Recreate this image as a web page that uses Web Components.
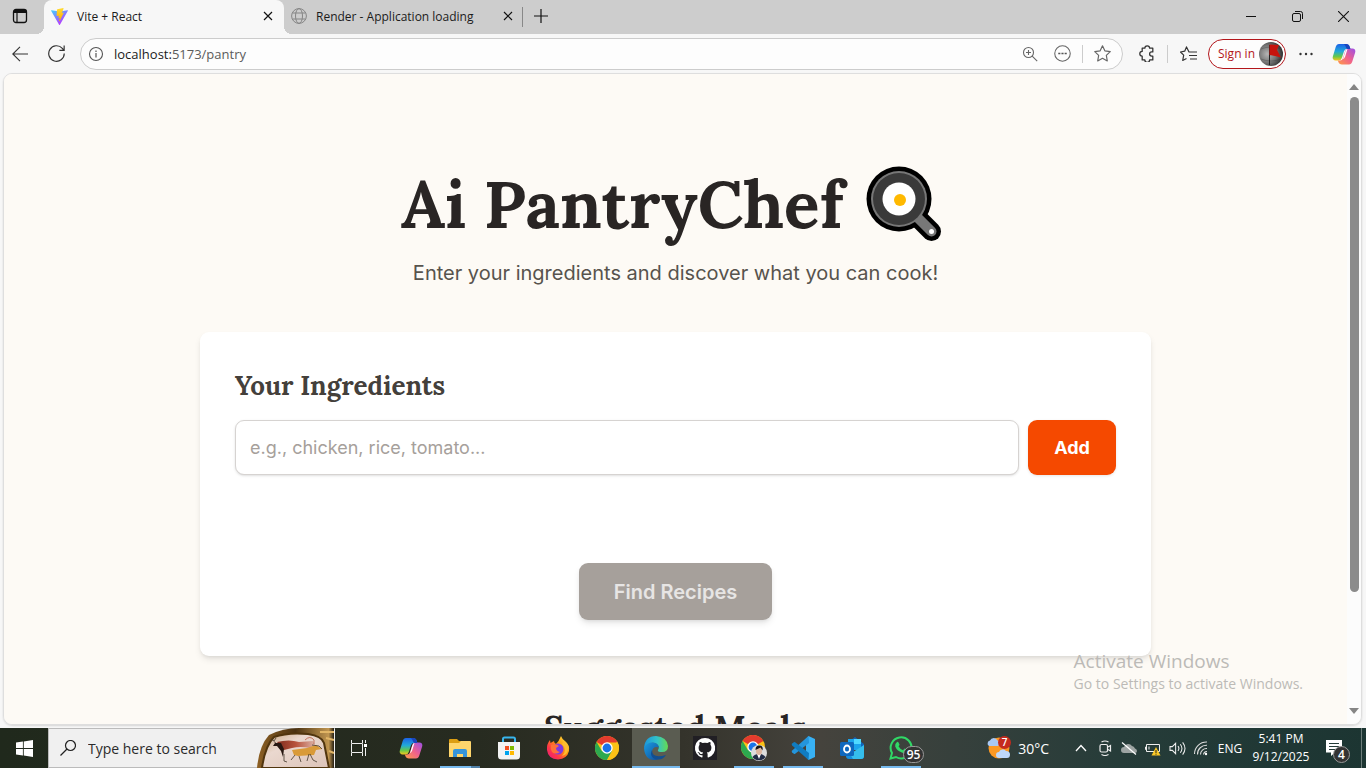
<!DOCTYPE html>
<html lang="en">
<head>
<meta charset="utf-8">
<title>Vite + React</title>
<style>
html,body{margin:0;height:100%}
body{font-family:"Segoe UI","Open Sans",sans-serif;overflow:hidden;color:#1b1b1b}
</style>
</head>
<body>
<desktop-screen></desktop-screen>
<script>
const ICONS = {
  workspaces:['0 0 16 16','<rect x="1.5" y="1.5" width="13" height="13" rx="2.5" fill="none" stroke="#111" stroke-width="1.3"/><path d="M1.5 5V4a2.500 2.500 0 0 1 2.500-2.500h8A2.500 2.500 0 0 1 14.500 4v1z" fill="#111"/><path d="M5 5v9" stroke="#111" stroke-width="1.200"/>'],
  vite:['0 0 16 16','<defs><linearGradient id="a" x1="0" y1="0" x2=".6" y2="1"><stop stop-color="#41d1ff"/><stop offset="1" stop-color="#bd34fe"/></linearGradient><linearGradient id="b" x1="0" y1="0" x2="0" y2="1"><stop stop-color="#ffdd35"/><stop offset="1" stop-color="#ffa800"/></linearGradient></defs><path d="M15.900 2.600 8.400 15.700q-.4.500-.8 0L.1 2.600q-.2-.6.4-.6L8 3.300 15.500 2q.6 0 .4.600z" fill="url(#a)"/><path d="M11.500.1 6 1.200l-.4.400-.3 5.600.4.300 1.700-.3-.5 2.300 1.400-.4-.7 3.200.5.100 4-8.100-1.900.3L11.900.500z" fill="url(#b)"/>'],
  close:['0 0 10 10','<path d="m1 1 8 8M9 1 1 9" stroke="#111" stroke-width="1.200"/>'],
  globe:['0 0 16 16','<g fill="none" stroke="#858585"><circle cx="8" cy="8" r="7.400"/><ellipse cx="8" cy="8" rx="3.500" ry="7.400"/><path d="M1.500 5h13M1.500 11h13"/></g>'],
  plus:['0 0 14 14','<path d="M7 0v14M0 7h14" stroke="#111" stroke-width="1.200"/>'],
  min:['0 0 10 10','<path d="M0 5.500h10" stroke="#111"/>'],
  restore:['0 0 11 11','<g fill="none" stroke="#111"><rect x=".5" y="2.500" width="8" height="8" rx="1.500"/><path d="M3 .5h5.500a2 2 0 0 1 2 2V8"/></g>'],
  winclose:['0 0 10 10','<path d="m0 0 10 10M10 0 0 10" stroke="#111"/>'],
  back:['0 0 16 16','<path d="M16 8H.8M8 .8.800 8 8 15.200" fill="none" stroke="#333" stroke-width="1.100"/>'],
  reload:['0 0 16 16','<path d="M15.300 8A7.300 7.300 0 1 1 13.500 3.200L15 5M15.200.500V5h-4.500" fill="none" stroke="#333" stroke-width="1.100"/>'],
  info:['0 0 16 16','<circle cx="8" cy="8" r="6.500" fill="none" stroke="#555" stroke-width="1.100"/><path d="M8 7v4.500M8 4.500V6" stroke="#555" stroke-width="1.200"/>'],
  zoom:['0 0 16 16','<g fill="none" stroke="#666" stroke-width="1.100"><circle cx="6.500" cy="6.500" r="5"/><path d="m10.200 10.200 5 5M4 6.500h5M6.500 4v5"/></g>'],
  more:['0 0 16 16','<circle cx="8" cy="8" r="7.300" fill="none" stroke="#666"/><path d="M4 7.300h2v1.400H4zM7 7.300h2v1.400H7zM10 7.300h2v1.400h-2z" fill="#555"/>'],
  star:['0 0 16 16','<path d="m8 .8 2.200 4.700 5.100.7-3.700 3.600.9 5.200L8 12.500 3.500 15l.9-5.200L.7 6.200l5.100-.7z" fill="none" stroke="#666" stroke-width="1.100" stroke-linejoin="round"/>'],
  puzzle:['0 0 16 16','<path d="M5.500 3A2.200 2.200 0 0 1 10 3h3v3.500h-1a2 2 0 0 0 0 4h1V14h-3a2.200 2.200 0 0 1-4.500 0H3v-3.500a2.200 2.200 0 0 1 0-4.500V3z" fill="none" stroke="#333" stroke-width="1.200" stroke-linejoin="round"/>'],
  favs:['0 0 17 16','<path d="M10.500 6H9L6.500.900 4.700 5.200l-4.200.8 3.200 3.200-1 5.300L6.500 12.500M10 6h7M9 9.500h8M10 13h7" fill="none" stroke="#333" stroke-width="1.200" stroke-linejoin="round"/>'],
  avatar:['0 0 24 24','<defs><radialGradient id="a" cx=".35" cy=".5" r=".7"><stop stop-color="#b5b5b5"/><stop offset=".5" stop-color="#777"/><stop offset="1" stop-color="#222"/></radialGradient></defs><circle cx="12" cy="12" r="12" fill="url(#a)"/><path d="M2 7q10-4 20 0M2 17q10 4 20 0" stroke="#333" stroke-width=".6" opacity=".5" fill="none"/><path d="M10.500 3v20" stroke="#222"/><path d="m10.500 2.500 9.500.5-2 5 4 7.500-6-1.500-5.500-1z" fill="#c6130d"/>'],
  dots:['0 0 14 14','<g fill="#333"><circle cx="1.500" cy="7" r="1.200"/><circle cx="7" cy="7" r="1.200"/><circle cx="12.500" cy="7" r="1.200"/></g>'],
  copilot:['0 0 24 24','<defs><linearGradient id="a" x1="0" y1="0" x2="0" y2="1"><stop stop-color="#1c62e8"/><stop offset=".45" stop-color="#21a9d9"/><stop offset=".75" stop-color="#64c84b"/><stop offset="1" stop-color="#f6c51b"/></linearGradient><linearGradient id="b" x1="1" y1="0" x2="0" y2="1"><stop stop-color="#9a4fe8"/><stop offset=".5" stop-color="#f0618c"/><stop offset="1" stop-color="#ff9c45"/></linearGradient></defs><path d="M7 2h7q3 0 3.800 3l.6 2H15q-2.300 0-3 2.200L9.800 16Q9 18.500 6.500 18.500h-3Q-.3 18 1 14L3.700 5Q4.600 2 7 2z" fill="url(#a)"/><path d="M17 22.500h-7q-3 0-3.800-3l-.4-1H8q2.300 0 3-2.200L13.200 9Q14 6.500 16.500 6.500h4Q24.300 7 23 11l-2.700 8.500Q19.400 22.500 17 22.500z" fill="url(#b)"/><path d="M12 2h2q3 0 3.800 3l.6 2H15.500Q14 7 13.500 4z" fill="#1b45bd"/><path d="m11.500 15.500 2-6.500q.7-2 2-2l-2.300 7.500q-.6 2-2.700 3 .7-.7 1-2z" fill="#fff"/>'],
  pan:['0 0 84 76','<path d="m48 48 17.500 17.500" stroke="#000" stroke-width="19" stroke-linecap="round"/><circle cx="33" cy="33" r="32.500"/><circle cx="33" cy="33" r="28" fill="#777"/><path d="m50 50 15.500 15.500" stroke="#777" stroke-width="10" stroke-linecap="round"/><circle cx="33" cy="33" r="26" fill="#3a3a3a"/><circle cx="33" cy="33" r="16.500" fill="#fff"/><circle cx="34" cy="34" r="6" fill="#ffb900"/><circle cx="65.500" cy="65.500" r="2.500" fill="#fff"/>'],
  up:['0 0 10 6','<path d="M5 0l5 6H0z" fill="#858585"/>'],
  down:['0 0 10 6','<path d="M5 6l5-6H0z" fill="#858585"/>'],
  start:['0 0 16 16','<path d="M0 2.300 6.500 1.400v6.200H0zM7.300 1.300 16 0v7.600H7.300zM0 8.400h6.500v6.200L0 13.700zM7.300 8.400H16V16l-8.700-1.300z" fill="#fff"/>'],
  search:['0 0 16 16','<circle cx="10.500" cy="5.500" r="5" fill="none" stroke="#222" stroke-width="1.200"/><path d="M7 9 .5 15.500" stroke="#222" stroke-width="1.300"/>'],
  cave:['0 0 78 40','<defs><linearGradient id="a"><stop stop-color="#8d6024"/><stop offset=".5" stop-color="#4b3211"/><stop offset=".93" stop-color="#c09550"/><stop offset="1" stop-color="#231e12"/></linearGradient><linearGradient id="b" x1="0" y1="0" x2="1" y2="1"><stop stop-color="#c9a67e"/><stop offset=".35" stop-color="#ead8cf"/><stop offset="1" stop-color="#dcc3b8"/></linearGradient><linearGradient id="c"><stop stop-color="#7e2c1d"/><stop offset=".5" stop-color="#b9533c"/><stop offset="1" stop-color="#b9533c" stop-opacity=".25"/></linearGradient></defs><path d="M0 40Q2 18 12 7 26 0 42 0h35v40z" fill="url(#a)"/><path d="M5 40Q8 18 17 9q14-5 34-3 14 2 16 9l5 25z" fill="url(#b)" stroke="#51350e" stroke-width="2"/><path d="M63 4h14M69 10l8 2M72 23l5 2" stroke="#e1b566" stroke-width="2"/><path d="M20 14q12-3 22 0l14-1 2 4-5 3q-10-2-18 0l-8 2z" fill="url(#c)"/><path d="m16 12 3 3 5 0 3 6-1 8-2-6-4-5-4 0 2-3z" fill="#281711"/><path d="m35 22 15-2 9-3 6 4-6 1-2 5-16 1-4-1z" fill="#d99a38"/><path d="m27 26 0 7 3 1M38 27l-4 5m8-4 2 6m9-8 3 6 4 2m-8-8-2 7M55 17l7 1 3 3M14 11l3 2 2-3" fill="none" stroke="#43372b" stroke-width=".8"/><path d="M48 12q5-5 9 0v4" fill="none" stroke="#b34a32" stroke-width=".7"/>'],
  taskview:['0 0 16 16','<path d="M.5 0v3.500h11V0M.5 16v-3.500h11V16M.5 4v8M11.500 4v8M14.500 0v3M14.500 8v8" fill="none" stroke="#eee"/><path d="M13 4h3v3h-3z" fill="#fff"/>'],
  folder:['0 0 24 24','<path d="M1 4q0-1 1-1h7l2 2h11v6H1z" fill="#dc9e13"/><path d="M1 7h10l2-2h9q1 0 1 1v15H1z" fill="#ffd66c"/><path d="M5 21v-6q0-2 2-2h10q2 0 2 2v6h-4v-3H9v3z" fill="#3595dc"/>'],
  store:['0 0 24 24','<path d="M6 7V3q0-1.500 1.500-1.500h9Q18 1.500 18 3v4" fill="none" stroke="#38b5ed" stroke-width="2"/><path d="M1 6h22v14q0 3.500-3.500 3.500h-15Q1 23.500 1 20z" fill="#f3f3f3"/><path d="M8 10h4v4H8z" fill="#f25022"/><path d="M13 10h4v4h-4z" fill="#7fba00"/><path d="M8 15h4v4H8z" fill="#00a4ef"/><path d="M13 15h4v4h-4z" fill="#ffb900"/>'],
  firefox:['0 0 24 24','<defs><linearGradient id="a" x1="1" y1="0" x2="0" y2="1"><stop stop-color="#fff44f"/><stop offset=".4" stop-color="#ff980e"/><stop offset=".7" stop-color="#ff3647"/><stop offset="1" stop-color="#e31587"/></linearGradient></defs><path d="M15 0q1 3 4 5 5 4 4 10-2 8-11 8.500Q2 23 1 14 .500 8 4 4l.5 3L8 5q0 2 2 3 3-3 5-8z" fill="url(#a)"/><circle cx="12" cy="13" r="5.500" fill="#8039df"/><path d="M5 9q5-2 8 1l-3 2q0 3 4 4-5 3-8 0-2-3-1-7z" fill="#ff7139"/><path d="M16 8q6 6 0 12 7-2 6-9-1-4-4-6z" fill="#ffbd2f"/>'],
  chrome:['0 0 24 24','<circle cx="12" cy="12" r="12" fill="#fbc116"/><path d="M12 12 1.600 6a12 12 0 0 1 20.800 0z" fill="#e33b2e"/><path d="M1.600 6a12 12 0 0 0 10.400 18l5.200-9H6.800z" fill="#2da94f"/><path d="M12 6.500H22.700A12 12 0 0 1 12 24l5-9z" fill="#fbc116"/><circle cx="12" cy="12" r="5.700" fill="#fff"/><circle cx="12" cy="12" r="4.400" fill="#1a73e8"/>'],
  chromeuser:['0 0 27 26','<circle cx="12" cy="12" r="12" fill="#fbc116"/><path d="M12 12 1.600 6a12 12 0 0 1 20.800 0z" fill="#e33b2e"/><path d="M1.600 6a12 12 0 0 0 10.400 18l5.200-9H6.800z" fill="#2da94f"/><circle cx="12" cy="12" r="5.700" fill="#fff"/><circle cx="12" cy="12" r="4.400" fill="#1a73e8"/><circle cx="18" cy="18" r="8" fill="#ddd"/><path d="M11.500 22q2-3 6.500-3t6.500 3A8 8 0 0 1 11.500 22z" fill="#222c46"/><path d="m16 19 2 5 2-5z" fill="#fff"/><ellipse cx="18" cy="16" rx="3" ry="4" fill="#dfb69f"/><path d="M14.500 15q0-5 4-4.500 4 0 3 5l-2-3z" fill="#191516"/>'],
  edge:['0 0 24 24','<defs><linearGradient id="a"><stop stop-color="#1b95dd"/><stop offset=".55" stop-color="#32c3c9"/><stop offset="1" stop-color="#66db50"/></linearGradient><linearGradient id="b" x1="0" y1="0" x2="1" y2="1"><stop stop-color="#1b9de2"/><stop offset="1" stop-color="#0e4d9c"/></linearGradient></defs><path d="M0 12Q1 0 12 0q11 1 12 10 0 6-6 6-5 0-4-2 2-3-1-6-6-4-13 4z" fill="url(#a)"/><path d="M0 12q3-6 9-5.500 5 .5 6 5-6-2-7 4 0 5 6 8Q1 26 0 12z" fill="url(#b)"/><path d="M8 14q0 9 14 5-4 6-11 4-6-3-3-9z" fill="#124f91"/>'],
  github:['0 0 24 24','<path d="M0 0h24v24H0z" fill="#211f24"/><path d="M12 2a10 10 0 0 0-3.200 19.500c.5.100.7-.2.700-.5v-1.800c-2.800.6-3.400-1.200-3.400-1.200-.5-1.100-1.100-1.500-1.100-1.500-.9-.6.1-.6.1-.6 1 .1 1.500 1 1.500 1 .9 1.600 2.400 1.100 2.900.9.1-.7.400-1.100.6-1.400-2.200-.3-4.500-1.100-4.500-5 0-1.100.4-2 1-2.700-.1-.3-.4-1.300.1-2.700 0 0 .9-.3 2.800 1a9.500 9.500 0 0 1 5 0c1.900-1.300 2.800-1 2.800-1 .5 1.400.2 2.400.1 2.700.6.7 1 1.600 1 2.700 0 3.900-2.300 4.700-4.500 5 .3.300.7.900.7 1.800V21c0 .3.200.6.700.5A10 10 0 0 0 12 2z" fill="#fff"/>'],
  code:['0 0 24 24','<path d="M17.500 0 24 3v18l-6.500 3L15 21V3z" fill="#38b1f4"/><path d="M17.500 0 1.200 14.500q-1 1 0 2l1.600 1.300q.7.400 1.300 0L18 7z" fill="#2495dc"/><path d="M17.500 24 1.200 9.500q-1-1 0-2l1.600-1.300q.7-.4 1.300 0L18 17z" fill="#107cc1"/>'],
  outlook:['0 0 24 24','<path d="m6 8 9-7 9 7v6H6z" fill="#1464b7"/><path d="M8 3h13v11H8z" fill="#1ba4ec"/><path d="M14 3h7v5h-7z" fill="#50d9ff"/><path d="m6 11 9 5 9-7v11q0 3-3 3H9q-3 0-3-3z" fill="#168dde"/><path d="m24 9-14 9 3 5h8q3 0 3-3z" fill="#35beec"/><rect y="6" width="14" height="14" rx="1.500" fill="#0f68be"/><ellipse cx="7" cy="13" rx="3" ry="3.500" fill="none" stroke="#fff" stroke-width="1.800"/>'],
  whatsapp:['0 0 24 24','<path d="M1.500 22.500 3 17A10.500 10.500 0 1 1 7 21z" fill="none" stroke="#30d866" stroke-width="2"/><path d="M8 6q1-.8 1.500.5l1 2q.2.600-1 1.700Q11 13 14 14.300l1.300-1.500q.4-.4 1 0l2 1q.8.400.2 1.600-1.200 2.600-4.500 1.600Q8 15 6.200 10.500 5.700 7.500 8 6z" fill="#30d866"/>'],
  weather:['0 0 24 24','<circle cx="13" cy="12" r="10.500" fill="#fb9823"/><path d="M3 10a3 3 0 0 1 1-5.500 4 4 0 0 1 7.500 0A3 3 0 0 1 12 10z" fill="#a8c8f4"/><path d="M13 22a3 3 0 0 1 0-6 4 4 0 0 1 7-1q4 0 4 3.500T21 22z" fill="#bed8fb"/>'],
  chevron:['0 0 12 8','<path d="m1 7 5-5.500L11 7" fill="none" stroke="#fff" stroke-width="1.300"/>'],
  camera:['0 0 16 16','<g fill="none" stroke="#eee" stroke-width="1.200"><rect x="3" y="4.500" width="7.500" height="7.500" rx="1.500"/><path d="m11 7 2.500-1.500V11L11 9.500M4.500 2q3.500-2 7 0M4.500 14.500q3.500 2 7 0"/></g>'],
  cloud:['0 0 16 16','<path d="M3 13a3 3 0 0 1 0-6 4.500 4.500 0 0 1 8-1q2 0 3 2.500 2 .5 2 2.500 0 2-2 2z" fill="#9da4a3"/><path d="m1 2.500 14 12" stroke="#fff" stroke-width="1.200"/>'],
  battery:['0 0 16 16','<path d="M1.500 4.500h13v7h-13zM1.500 7H.500v2.500h1M4 6.500v3" fill="none" stroke="#eee"/><path d="m11 7 4.500 8.500h-9z" fill="#fac826"/><path d="M11 10v3M11 13.700v1" stroke="#222"/>'],
  volume:['0 0 18 16','<path d="M1 6h2.500L7 2.500v11L3.500 10H1zM9.500 5.500q2 2.500 0 5M12 3.500q3.500 4.500 0 9M14.500 1.500q5 6.500 0 13" fill="none" stroke="#eee" stroke-width="1.100"/>'],
  wifi:['0 0 16 16','<g fill="none" stroke="#ddd" stroke-width="1.100"><path d="M1.500 14A12 12 0 0 1 14 2M4.500 14.500A9 9 0 0 1 14 5.200M7.500 14.500A6 6 0 0 1 14 8.500M10.500 14.500a3.500 3.500 0 0 1 3.500-3"/></g><circle cx="13" cy="14" r="1.200" fill="#fff"/>'],
  note:['0 0 16 16','<path d="M0 0h16v12.500H9L5 16v-3.500H0z" fill="#fff"/><path d="M3 3.500h10M3 6.500h10M3 9.500h7" stroke="#263c39" stroke-width="1.200"/>']
};
const define = (name, css, html, setup) => {
  const t = document.createElement('template');
  t.innerHTML = `<style>*{box-sizing:border-box}button,input{font:inherit;margin:0}button{padding:0;border:0;background:none;color:inherit}${css}</style>${html}`;
  customElements.define(name, class extends HTMLElement {
    constructor(){ super(); this.attachShadow({mode:'open'}).append(t.content.cloneNode(true)); }
    connectedCallback(){ if(setup && !this.ready){ this.ready = true; setup(this, this.shadowRoot); } }
  });
};
define('ui-icon', ':host{display:block;flex:none}svg{display:block;width:100%;height:100%}', '', (el, root) => {
  const [box, art] = ICONS[el.getAttribute('name')];
  const size = +(el.getAttribute('size') || 16), [, , w, h] = box.split(' ');
  el.style.width = size + 'px';
  el.style.height = Math.round(size * h / w) + 'px';
  root.innerHTML += `<svg viewBox="${box}" aria-hidden="true">${art}</svg>`;
});
define('browser-tab', `
:host{display:flex;align-items:center;width:240px;height:34px;padding:0 11px 2px 7px;position:relative;font-size:12px;gap:9px}
:host([active]){background:#f7f7f7;border-radius:8px 8px 0 0}
:host([active])::before,:host([active])::after{content:"";position:absolute;bottom:0;width:8px;height:8px}
:host([active])::before{left:-8px;background:radial-gradient(circle at 0 0,#cdcdcd 8px,#f7f7f7 8px)}
:host([active])::after{right:-8px;background:radial-gradient(circle at 100% 0,#cdcdcd 8px,#f7f7f7 8px)}
span{flex:1;white-space:nowrap}`,
`<slot name="icon"></slot><span><slot></slot></span><button aria-label="Close tab"><ui-icon name="close" size="10"></ui-icon></button>`);
define('tab-strip', `
:host{display:flex;height:34px;background:#cdcdcd;flex:none}
button{display:grid;place-items:center}
.ws{width:44px;padding:0 4px 2px 0}.add{width:36px;padding-bottom:3px}.sep{width:1px;height:20px;background:#888;margin:7px 0 0 -2px}
.win{display:flex;margin-left:auto}.win button{width:46px;padding-bottom:2px}
`,`<button class="ws" aria-label="Workspaces"><ui-icon name="workspaces" size="16"></ui-icon></button>
<browser-tab active><ui-icon slot="icon" name="vite" size="17"></ui-icon>Vite + React</browser-tab>
<browser-tab><ui-icon slot="icon" name="globe" size="16"></ui-icon>Render - Application loading</browser-tab>
<i class="sep"></i><button class="add" aria-label="New tab"><ui-icon name="plus" size="14"></ui-icon></button>
<div class="win"><button aria-label="Minimize"><ui-icon name="min" size="10"></ui-icon></button><button aria-label="Restore"><ui-icon name="restore" size="11"></ui-icon></button><button aria-label="Close"><ui-icon name="winclose" size="11"></ui-icon></button></div>`);
define('browser-toolbar', `
:host{display:flex;align-items:center;height:39px;padding:0 4px 0 2px;background:#f7f7f7;flex:none}
button{display:grid;place-items:center;width:36px;height:32px;flex:none}
.addr{flex:1;display:flex;align-items:center;height:32px;border:1px solid #ccc;border-radius:16px;background:#fdfdfd;margin-left:6px;padding-left:7px;min-width:0}
.url{flex:1;font-size:13px;margin-left:10px;color:#5b5b5b}.url b{font-weight:400;color:#1b1b1b}
.addr button{width:32px}.addr .star{width:39px}
.sep{width:1px;height:18px;background:#ccc;flex:none}.addr .sep{margin-left:4px}
.ext{width:40px}.addr + .ext{margin-left:4px}
.sign{display:flex;width:78px;height:30px;border:1px solid #b3161b;border-radius:15px;color:#b3161b;font-size:12px;align-items:center;justify-content:space-between;padding:0 2px 0 9px;background:#fdfdfd}
.dots{width:40px}
`,`<button aria-label="Back"><ui-icon name="back" size="16"></ui-icon></button><button aria-label="Refresh"><ui-icon name="reload" size="17"></ui-icon></button>
<div class="addr"><ui-icon name="info" size="16"></ui-icon><span class="url"><b>localhost:</b>5173/pantry</span>
<button aria-label="Zoom"><ui-icon name="zoom" size="16"></ui-icon></button><button aria-label="More page actions"><ui-icon name="more" size="17"></ui-icon></button><i class="sep"></i><button class="star" aria-label="Add to favorites"><ui-icon name="star" size="17"></ui-icon></button></div>
<button class="ext" aria-label="Extensions"><ui-icon name="puzzle" size="17"></ui-icon></button><i class="sep"></i><button class="ext" aria-label="Favorites"><ui-icon name="favs" size="17"></ui-icon></button>
<button class="sign">Sign in<ui-icon name="avatar" size="24"></ui-icon></button><button class="dots" aria-label="Settings"><ui-icon name="dots" size="14"></ui-icon></button><button aria-label="Copilot"><ui-icon name="copilot" size="24"></ui-icon></button>`);
define('ingredient-card', `
:host{display:block;width:100%;max-width:951px;background:#fff;border-radius:9px;padding:35px 35px 36px;box-shadow:0 4px 7px -1px #0000001a,0 2px 4px -2px #0000001a}
h2{margin:0 0 15px;font:bold 26px/38px Lora,"Liberation Serif",serif;color:#44403b}
form{display:flex;gap:9px;height:55px;font-size:18px}
input{flex:1;min-width:0;border:1px solid #d6d3d1;border-radius:9px;padding:0 14px;box-shadow:0 1px 3px #0000001a,0 1px 2px -1px #0000001a;outline:0;background:#fff}
input::placeholder{color:#a6a09b}
.add{width:88px;border-radius:9px;background:#f54900;color:#fff;font-weight:700;box-shadow:0 1px 3px #0000001a}
.find{display:block;margin:88px auto 0;height:57px;padding:0 35px;border-radius:9px;background:#a6a09b;color:#e7e5e4;font-size:20px;font-weight:600;box-shadow:0 4px 7px -1px #0000001a,0 2px 4px -2px #0000001a}
`,`<h2>Your Ingredients</h2><form><input type="text" aria-label="Ingredient" placeholder="e.g., chicken, rice, tomato..."><button class="add" type="button">Add</button></form><button class="find" disabled>Find Recipes</button>`);
define('pantry-page', `
:host{display:flex;flex-direction:column;align-items:center;flex:1;min-width:0;overflow:hidden;background:#fdfaf5;padding:90px 36px 0;font-family:Inter,sans-serif}
h1{display:flex;align-items:center;gap:22px;margin:0;font:bold 66px/80px Lora,"Liberation Serif",serif;color:#292524}
p{margin:14px 0 44px;font-size:20px;line-height:30px;color:#57534d}
h2{margin:49px 0 0;font:bold 33px/44px Lora,"Liberation Serif",serif;color:#292524}
`,`<h1>Ai PantryChef <ui-icon name="pan" size="84"></ui-icon></h1><p>Enter your ingredients and discover what you can cook!</p><ingredient-card></ingredient-card><h2>Suggested Meals</h2>`);
define('scroll-rail', `
:host{display:flex;flex-direction:column;align-items:center;width:14px;background:#fcfcfc;padding:10px 0;flex:none}
.track{flex:1;padding:7px 0;width:9px}.thumb{height:82%;background:#8b8b8b;border-radius:5px}`,
`<ui-icon name="up" size="10"></ui-icon><div class="track"><div class="thumb"></div></div><ui-icon name="down" size="10"></ui-icon>`);
define('task-button', `
:host{display:block;width:48px;height:40px;position:relative;flex:none}
button{display:grid;place-items:center;width:100%;height:100%}
:host([open])::after{content:"";position:absolute;left:4px;right:4px;bottom:0;height:2px;background:#76b9ed}
:host([multi])::after{background:linear-gradient(90deg,#76b9ed 31px,#4f7fa6 31px)}
:host([current]){background:#5a5c51}:host([current])::after{left:0;right:0}
`,`<button><slot></slot></button>`,(el,r)=>{
  const i=document.createElement('ui-icon');i.setAttribute('name',el.getAttribute('icon'));i.setAttribute('size',el.getAttribute('size')||24);
  const b=r.querySelector('button');b.setAttribute('aria-label',el.getAttribute('label'));b.prepend(i);
});
define('count-badge', `
:host{position:absolute;display:grid;place-items:center;height:17px;min-width:17px;border-radius:9px;border:1px solid #999;background:#333;color:#fff;font-size:12px;font-weight:600;line-height:15px}
:host([wide]){left:26px;top:18px;width:21px}:host([note]){left:19px;top:18px}:host([alert]){left:12px;top:0;height:13px;min-width:13px;border:0;background:#c52b1e;font-size:10px;line-height:13px}`,'<slot></slot>');
define('task-bar', `
:host{display:flex;height:40px;flex:none;color:#fff;background:linear-gradient(90deg,#20291c,#272b20 35%,#34332b 50%,#45433d 60%,#36403c 70%,#263c39 82%,#1c3532)}
.search{display:flex;align-items:center;width:287px;background:#f0f0f0;border:1px solid #bbb;border-right:0;flex:none;color:#333;padding-left:11px;height:40px}
.search input{flex:1;min-width:0;border:0;background:none;outline:0;padding:0 0 0 12px;font-size:14px}.search input::placeholder{color:#2b2b2b;opacity:1}
.apps{display:flex;gap:1px;margin-left:4px}
.tray{display:flex;align-items:center;margin-left:auto;font-size:12px;flex:none}
.weather{display:flex;align-items:center;gap:8px;font-size:14px;margin-right:20px;position:relative}
.icons{display:flex}.icons button{display:grid;place-items:center;width:24px;height:40px}
.lang{width:34px;text-align:center}
.clock{width:66px;text-align:center;line-height:18px;margin-left:1px}
.note{position:relative;display:grid;place-items:center;width:40px;height:40px;margin-right:7px}
.desk{width:5px;height:40px;border-left:1px solid #6d7d7a}
`,`<task-button icon="start" size="17" label="Start"></task-button>
<label class="search"><ui-icon name="search" size="16"></ui-icon><input type="text" aria-label="Search" placeholder="Type here to search"><ui-icon name="cave" size="78"></ui-icon></label>
<task-button icon="taskview" size="16" label="Task View"></task-button>
<div class="apps"><task-button icon="copilot" label="Copilot"></task-button><task-button icon="folder" label="File Explorer" open multi></task-button><task-button icon="store" label="Microsoft Store"></task-button><task-button icon="firefox" label="Firefox"></task-button><task-button icon="chrome" label="Chrome"></task-button><task-button icon="edge" label="Edge" open current></task-button><task-button icon="github" label="GitHub"></task-button><task-button icon="chromeuser" size="27" label="Chrome profile" open></task-button><task-button icon="code" label="Visual Studio Code" open></task-button><task-button icon="outlook" label="Outlook"></task-button><task-button icon="whatsapp" label="WhatsApp" open><count-badge wide>95</count-badge></task-button></div>
<div class="tray"><button class="weather"><ui-icon name="weather" size="24"></ui-icon><count-badge alert>7</count-badge>30°C</button>
<div class="icons"><button aria-label="Show hidden icons"><ui-icon name="chevron" size="12"></ui-icon></button><button aria-label="Meet Now"><ui-icon name="camera" size="16"></ui-icon></button><button aria-label="OneDrive"><ui-icon name="cloud" size="16"></ui-icon></button><button aria-label="Battery"><ui-icon name="battery" size="16"></ui-icon></button><button aria-label="Volume"><ui-icon name="volume" size="17"></ui-icon></button><button aria-label="Network"><ui-icon name="wifi" size="16"></ui-icon></button></div>
<button class="lang">ENG</button><button class="clock">5:41 PM<br>9/12/2025</button><button class="note" aria-label="Notifications"><ui-icon name="note" size="16"></ui-icon><count-badge note>4</count-badge></button><i class="desk"></i></div>`);
define('desktop-screen', `
:host{display:flex;flex-direction:column;height:100vh;background:#f7f7f7;position:relative}
main{flex:1;min-height:0;display:flex;margin:0 4px 3px 3px;border:1px solid #dedede;border-radius:9px;overflow:hidden;box-shadow:0 1px 2px #0002}
.mark{position:absolute;right:63px;bottom:74px;color:#bcbab7;font-size:14px;line-height:20px;pointer-events:none;white-space:nowrap}
.mark b{display:block;font-weight:400;font-size:19px;line-height:25px}
`,`<tab-strip></tab-strip><browser-toolbar></browser-toolbar><main><pantry-page></pantry-page><scroll-rail></scroll-rail></main><task-bar></task-bar><div class="mark"><b>Activate Windows</b>Go to Settings to activate Windows.</div>`);
</script>
</body>
</html>
